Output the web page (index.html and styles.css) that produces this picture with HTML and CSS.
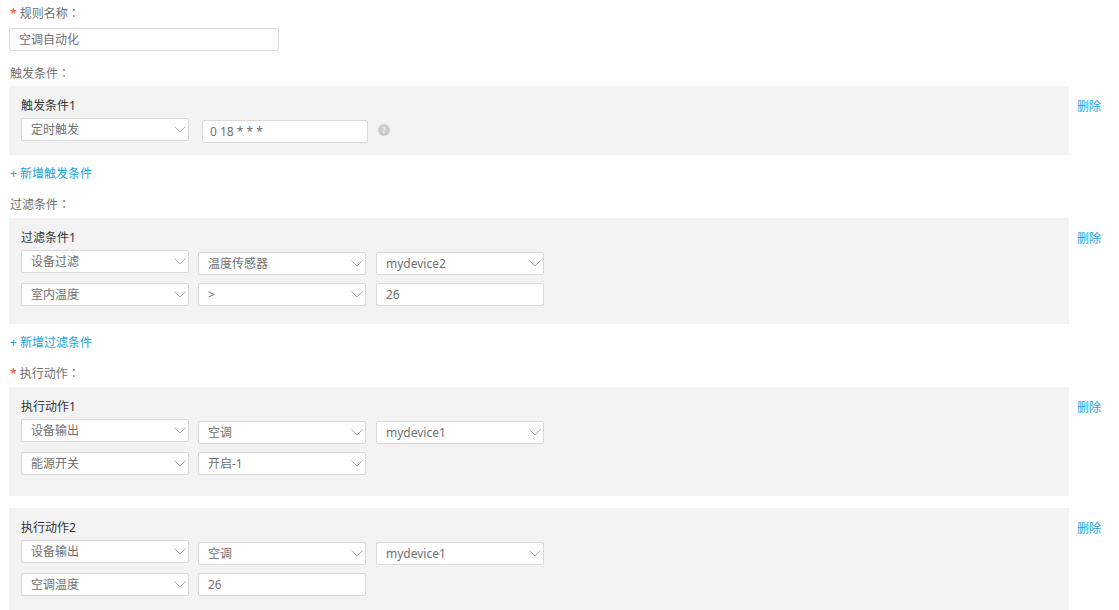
FILE: index.html
```html
<!DOCTYPE html>
<html lang="zh-CN">
<head>
<meta charset="utf-8">
<title>规则</title>
<link rel="stylesheet" href="styles.css">
</head>
<body>
<div class="form">
  <div class="label label-first"><span class="req">*</span>规则名称<span class="colon" lang="zh-TW">：</span></div>
  <div class="field field-name">空调自动化</div>

  <div class="label label-trigger">触发条件<span class="colon" lang="zh-TW">：</span></div>
  <div class="block">
    <div class="panel panel-trigger">
      <div class="panel-title">触发条件1</div>
      <div class="row row-first">
        <div class="select">定时触发<svg class="chev" viewBox="0 0 12 7"><path d="M0.5 0.5 L6 6 L11.5 0.5" /></svg></div>
        <div class="field field-cron">0 18 * * *</div>
        <span class="help">?</span>
      </div>
    </div>
    <a class="del">删除</a>
  </div>
  <a class="add">+ 新增触发条件</a>

  <div class="label label-section">过滤条件<span class="colon" lang="zh-TW">：</span></div>
  <div class="block">
    <div class="panel panel-filter">
      <div class="panel-title">过滤条件1</div>
      <div class="row row-first">
        <div class="select">设备过滤<svg class="chev" viewBox="0 0 12 7"><path d="M0.5 0.5 L6 6 L11.5 0.5" /></svg></div>
        <div class="select">温度传感器<svg class="chev" viewBox="0 0 12 7"><path d="M0.5 0.5 L6 6 L11.5 0.5" /></svg></div>
        <div class="select">mydevice2<svg class="chev" viewBox="0 0 12 7"><path d="M0.5 0.5 L6 6 L11.5 0.5" /></svg></div>
      </div>
      <div class="row">
        <div class="select">室内温度<svg class="chev" viewBox="0 0 12 7"><path d="M0.5 0.5 L6 6 L11.5 0.5" /></svg></div>
        <div class="select">&gt;<svg class="chev" viewBox="0 0 12 7"><path d="M0.5 0.5 L6 6 L11.5 0.5" /></svg></div>
        <div class="field">26</div>
      </div>
    </div>
    <a class="del">删除</a>
  </div>
  <a class="add">+ 新增过滤条件</a>

  <div class="label label-section"><span class="req">*</span>执行动作<span class="colon" lang="zh-TW">：</span></div>
  <div class="block">
    <div class="panel panel-action">
      <div class="panel-title">执行动作1</div>
      <div class="row row-first">
        <div class="select">设备输出<svg class="chev" viewBox="0 0 12 7"><path d="M0.5 0.5 L6 6 L11.5 0.5" /></svg></div>
        <div class="select">空调<svg class="chev" viewBox="0 0 12 7"><path d="M0.5 0.5 L6 6 L11.5 0.5" /></svg></div>
        <div class="select">mydevice1<svg class="chev" viewBox="0 0 12 7"><path d="M0.5 0.5 L6 6 L11.5 0.5" /></svg></div>
      </div>
      <div class="row">
        <div class="select">能源开关<svg class="chev" viewBox="0 0 12 7"><path d="M0.5 0.5 L6 6 L11.5 0.5" /></svg></div>
        <div class="select">开启-1<svg class="chev" viewBox="0 0 12 7"><path d="M0.5 0.5 L6 6 L11.5 0.5" /></svg></div>
      </div>
    </div>
    <a class="del">删除</a>
  </div>
  <div class="block block-next">
    <div class="panel panel-action">
      <div class="panel-title">执行动作2</div>
      <div class="row row-first">
        <div class="select">设备输出<svg class="chev" viewBox="0 0 12 7"><path d="M0.5 0.5 L6 6 L11.5 0.5" /></svg></div>
        <div class="select">空调<svg class="chev" viewBox="0 0 12 7"><path d="M0.5 0.5 L6 6 L11.5 0.5" /></svg></div>
        <div class="select">mydevice1<svg class="chev" viewBox="0 0 12 7"><path d="M0.5 0.5 L6 6 L11.5 0.5" /></svg></div>
      </div>
      <div class="row">
        <div class="select">空调温度<svg class="chev" viewBox="0 0 12 7"><path d="M0.5 0.5 L6 6 L11.5 0.5" /></svg></div>
        <div class="field">26</div>
      </div>
    </div>
    <a class="del">删除</a>
  </div>
</div>
</body>
</html>
```

FILE: styles.css
```css
html, body {
  margin: 0;
  padding: 0;
  background: #ffffff;
  overflow: hidden;
}
body {
  font-family: "Noto Sans", "Noto Sans CJK SC", sans-serif;
  font-size: 12px;
  color: #666666;
}
.form {
  padding: 4px 0 0 9px;
  display: flex;
  flex-direction: column;
  align-items: flex-start;
}
.label {
  line-height: 18px;
  height: 18px;
  color: #707070;
  padding-left: 1px;
}
.colon {
  font-family: "Noto Sans CJK TC", sans-serif;
}
.req {
  color: #f04a2b;
  margin-right: 3px;
}
.label-trigger {
  margin-top: 13px;
}
.label-section {
  margin-top: 12px;
}
.field,
.select {
  box-sizing: border-box;
  height: 23px;
  line-height: 21px;
  border: 1px solid #d9d9d9;
  border-radius: 2px;
  background: #ffffff;
  color: #707070;
  padding-left: 9px;
  white-space: nowrap;
}
.field {
  width: 168px;
}
.field-name {
  margin-top: 6px;
  width: 270px;
}
.select {
  width: 168px;
  position: relative;
}
.chev {
  position: absolute;
  right: 2px;
  top: 7px;
  width: 12px;
  height: 7px;
  fill: none;
  stroke: #a9adb8;
  stroke-width: 1;
}
.block {
  display: flex;
  align-items: flex-start;
  margin-top: 4px;
}
.block + .block-next {
  margin-top: 12px;
}
.label-section + .block {
  margin-top: 5px;
}
.panel {
  box-sizing: border-box;
  width: 1060px;
  background: #f3f3f3;
  padding: 10px 0 18px 12px;
}
.panel-trigger {
  padding-bottom: 12px;
}
.panel-action {
  padding-bottom: 21px;
}
.panel-title {
  line-height: 20px;
  height: 20px;
  color: #333333;
}
.row {
  display: flex;
  align-items: flex-start;
  gap: 9px;
  margin-top: 8px;
}
.row > :nth-child(3) {
  margin-left: 1px;
}
.row-first {
  margin-top: 2px;
}
.row-first > .select ~ .select,
.row-first > .select ~ .field {
  margin-top: 2px;
}
.field-cron {
  width: 166px;
  margin-left: 4px;
  padding-left: 7px;
}
.row > .help {
  display: inline-block;
  width: 12px;
  height: 12px;
  border-radius: 50%;
  background: #cccccc;
  color: #eeeeee;
  font-size: 9px;
  line-height: 12px;
  text-align: center;
  margin-left: 1px;
  margin-top: 6px;
  font-weight: bold;
}
.del {
  margin-left: 8px;
  margin-top: 12px;
  line-height: 18px;
  color: #1aa2dc;
  cursor: pointer;
}
.add {
  margin-top: 10px;
  line-height: 18px;
  height: 18px;
  color: #1aa2dc;
  padding-left: 1px;
  cursor: pointer;
}
```
